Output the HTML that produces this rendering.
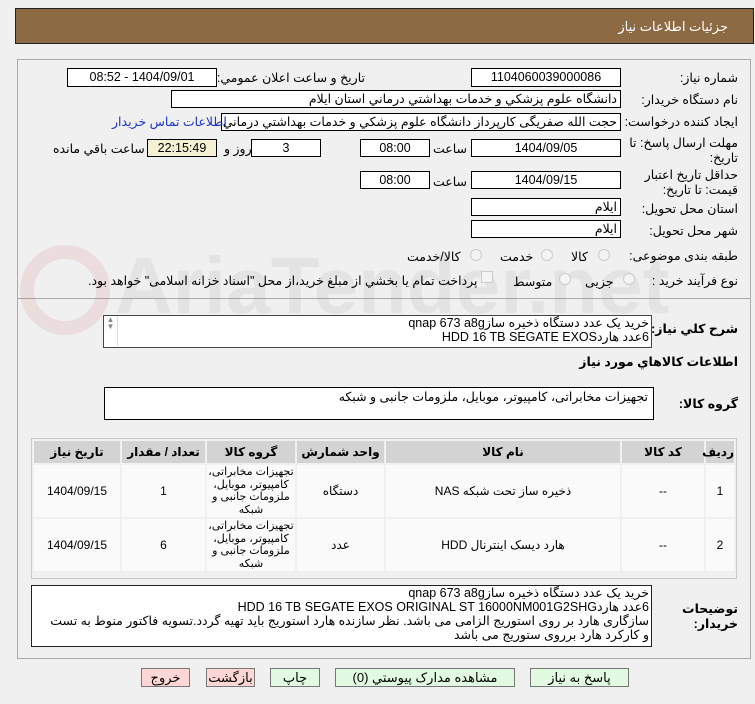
<!DOCTYPE html>
<html><head><meta charset="utf-8"><style>
*{margin:0;padding:0;box-sizing:border-box}
body{width:755px;height:704px;background:#f0f0f0;font-family:"Liberation Sans","DejaVu Sans",sans-serif;font-size:12.5px;color:#000;position:relative;overflow:hidden}
.a{position:absolute;white-space:nowrap}
.r{direction:rtl;text-align:right}
.f{position:absolute;background:#fff;border:1px solid #000;direction:rtl;text-align:center;line-height:16px;white-space:nowrap;overflow:hidden}
.lab{position:absolute;direction:rtl;text-align:right;white-space:nowrap}
.rad{position:absolute;width:12px;height:12px;border-radius:50%;border:1px solid #ccc;background:#f4f4f4}
table{border-collapse:separate;border-spacing:2px;table-layout:fixed}
td,th{text-align:center;vertical-align:middle;font-size:12px;white-space:normal;padding:0}
th{background:#d3d3d3;height:22px;font-weight:bold}
td{background:#fafafa;height:52px}
.gc{height:52px;overflow:hidden;font-size:11px;line-height:12.5px;display:flex;align-items:center;justify-content:center;padding:0 1px}
.btn{position:absolute;top:668px;height:19px;border:1px solid #777;text-align:center;line-height:17px;direction:rtl;font-size:13px}
.g{background:#e2fae2}.p{background:#ffd6d6}
</style></head><body>
<div class="a" style="left:15px;top:8px;width:739px;height:36px;background:#8b6a44;border:1px solid #222"></div>
<div class="a r" style="right:27px;top:19px;color:#fff;font-size:13px">جزئیات اطلاعات نیاز</div>

<div class="a" style="left:17px;top:59px;width:734px;height:240px;border:1px solid #aaa"></div>
<div class="a" style="left:17px;top:298px;width:734px;height:361px;border:1px solid #aaa;border-top:none"></div>

<div class="a" style="left:20px;top:245px;width:90px;height:90px;border-radius:50%;border:14px solid rgba(200,60,60,0.10)"></div>
<div class="a" style="left:115px;top:240px;font-size:80px;color:rgba(120,120,120,0.10);font-weight:bold">AriaTender.net</div>

<div class="lab" style="right:17px;top:70px">شماره نیاز:</div>
<div class="f" style="left:471px;top:68px;width:150px;height:19px">1104060039000086</div>
<div class="lab" style="right:390px;top:70px">تاریخ و ساعت اعلان عمومي:</div>
<div class="f" style="left:67px;top:68px;width:150px;height:19px">1404/09/01 - 08:52</div>

<div class="lab" style="right:17px;top:92px">نام دستگاه خريدار:</div>
<div class="f" style="left:171px;top:90px;width:450px;height:18px;text-align:right;padding-right:3px">دانشگاه علوم پزشکي و خدمات بهداشتي درماني استان ايلام</div>

<div class="lab" style="right:17px;top:114px">ایجاد کننده درخواست:</div>
<div class="f" style="left:221px;top:113px;width:400px;height:18px;text-align:right;padding-right:3px">حجت الله صفریگی کارپرداز دانشگاه علوم پزشکي و خدمات بهداشتي درماني استان ايلام</div>
<div class="lab" style="left:112px;top:114px;color:#1a33cc">اطلاعات تماس خريدار</div>

<div class="lab" style="right:17px;top:136px;line-height:15px">مهلت ارسال پاسخ: تا<br>تاريخ:</div>
<div class="f" style="left:471px;top:139px;width:150px;height:18px">1404/09/05</div>
<div class="lab" style="left:433px;top:141px">ساعت</div>
<div class="f" style="left:360px;top:139px;width:70px;height:18px">08:00</div>
<div class="f" style="left:251px;top:139px;width:70px;height:18px">3</div>
<div class="lab" style="left:224px;top:141px">روز و</div>
<div class="f" style="left:147px;top:139px;width:70px;height:18px;background:#f4f2d2">22:15:49</div>
<div class="lab" style="left:53px;top:141px">ساعت باقي مانده</div>

<div class="lab" style="right:17px;top:168px;line-height:15px">حداقل تاريخ اعتبار<br>قيمت: تا تاريخ:</div>
<div class="f" style="left:471px;top:171px;width:150px;height:18px">1404/09/15</div>
<div class="lab" style="left:433px;top:174px">ساعت</div>
<div class="f" style="left:360px;top:171px;width:70px;height:18px">08:00</div>

<div class="lab" style="right:17px;top:201px">استان محل تحويل:</div>
<div class="f" style="left:471px;top:198px;width:150px;height:18px;text-align:right;padding-right:3px">ايلام</div>
<div class="lab" style="right:17px;top:223px">شهر محل تحويل:</div>
<div class="f" style="left:471px;top:220px;width:150px;height:18px;text-align:right;padding-right:3px">ايلام</div>

<div class="lab" style="right:17px;top:248px">طبقه بندی موضوعی:</div>
<div class="rad" style="left:598px;top:249px"></div><div class="lab" style="left:571px;top:249px">کالا</div>
<div class="rad" style="left:541px;top:249px"></div><div class="lab" style="left:500px;top:249px">خدمت</div>
<div class="rad" style="left:470px;top:249px"></div><div class="lab" style="left:407px;top:249px">کالا/خدمت</div>

<div class="lab" style="right:17px;top:273px">نوع فرآيند خريد :</div>
<div class="rad" style="left:623px;top:273px"></div><div class="lab" style="left:585px;top:274px">جزیی</div>
<div class="rad" style="left:559px;top:273px"></div><div class="lab" style="left:513px;top:274px">متوسط</div>
<div class="a" style="left:481px;top:271px;width:12px;height:12px;border:1px solid #ccc;background:#f4f4f4"></div>
<div class="lab" style="left:88px;top:273px">پرداخت تمام يا بخشي از مبلغ خريد،از محل "اسناد خزانه اسلامی" خواهد بود.</div>

<div class="lab" style="right:17px;top:321px;font-weight:bold">شرح کلي نیاز:</div>
<div class="f" style="left:103px;top:315px;width:549px;height:33px;text-align:right;padding-right:2px;line-height:14px;border-color:#444">خريد يک عدد دستگاه ذخيره سازqnap 673 a8g<br>6عدد هاردHDD 16 TB SEGATE EXOS</div>
<div class="a" style="left:104px;top:316px;width:14px;height:30px;border-right:1px solid #ddd;color:#888;font-size:8px;line-height:7px;text-align:center">▲<br>▼</div>

<div class="lab" style="right:17px;top:354px;font-weight:bold">اطلاعات کالاهاي مورد نیاز</div>
<div class="lab" style="right:17px;top:396px;font-weight:bold">گروه کالا:</div>
<div class="f" style="left:104px;top:387px;width:550px;height:33px;text-align:right;padding-right:5px;line-height:14px;padding-top:2px">تجهيزات مخابراتی، کامپیوتر، موبایل، ملزومات جانبی و شبکه</div>

<div class="a" style="left:31px;top:438px;width:706px;height:141px;border:1px solid #c8c8c8;background:#f0f0f0;white-space:normal;overflow:hidden">
<table dir="rtl" style="width:704px">
<colgroup><col style="width:28px"><col style="width:82px"><col style="width:234px"><col style="width:87px"><col style="width:88px"><col style="width:83px"><col></colgroup>
<tr><th>رديف</th><th>کد کالا</th><th>نام کالا</th><th>واحد شمارش</th><th>گروه کالا</th><th>تعداد / مقدار</th><th>تاريخ نياز</th></tr>
<tr><td>1</td><td>--</td><td>ذخيره ساز تحت شبکه NAS</td><td>دستگاه</td><td><div class="gc">تجهيزات مخابراتی، کامپیوتر، موبایل، ملزومات جانبی و شبکه</div></td><td>1</td><td>1404/09/15</td></tr>
<tr><td>2</td><td>--</td><td>هارد دیسک اینترنال HDD</td><td>عدد</td><td><div class="gc">تجهيزات مخابراتی، کامپیوتر، موبایل، ملزومات جانبی و شبکه</div></td><td>6</td><td>1404/09/15</td></tr>
</table></div>

<div class="lab" style="right:17px;top:602px;font-weight:bold;line-height:15px">توضيحات<br>خريدار:</div>
<div class="f" style="left:31px;top:585px;width:621px;height:62px;text-align:right;padding-right:2px;line-height:14px;white-space:normal;padding-left:18px;border-color:#222">خريد يک عدد دستگاه ذخيره سازqnap 673 a8g<br>6عدد هاردHDD 16 TB SEGATE EXOS ORIGINAL ST 16000NM001G2SHG<br>سازگاری هارد بر روی استوریج الزامی می باشد. نظر سازنده هارد استوریج باید تهیه گردد.تسویه فاکتور منوط به تست و کارکرد هارد برروی ستوریج می باشد</div>

<div class="btn g" style="left:530px;width:99px">پاسخ به نياز</div>
<div class="btn g" style="left:335px;width:180px">مشاهده مدارک پيوستي (0)</div>
<div class="btn g" style="left:270px;width:50px">چاپ</div>
<div class="btn p" style="left:206px;width:49px">بازگشت</div>
<div class="btn p" style="left:141px;width:49px">خروج</div>
</body></html>
